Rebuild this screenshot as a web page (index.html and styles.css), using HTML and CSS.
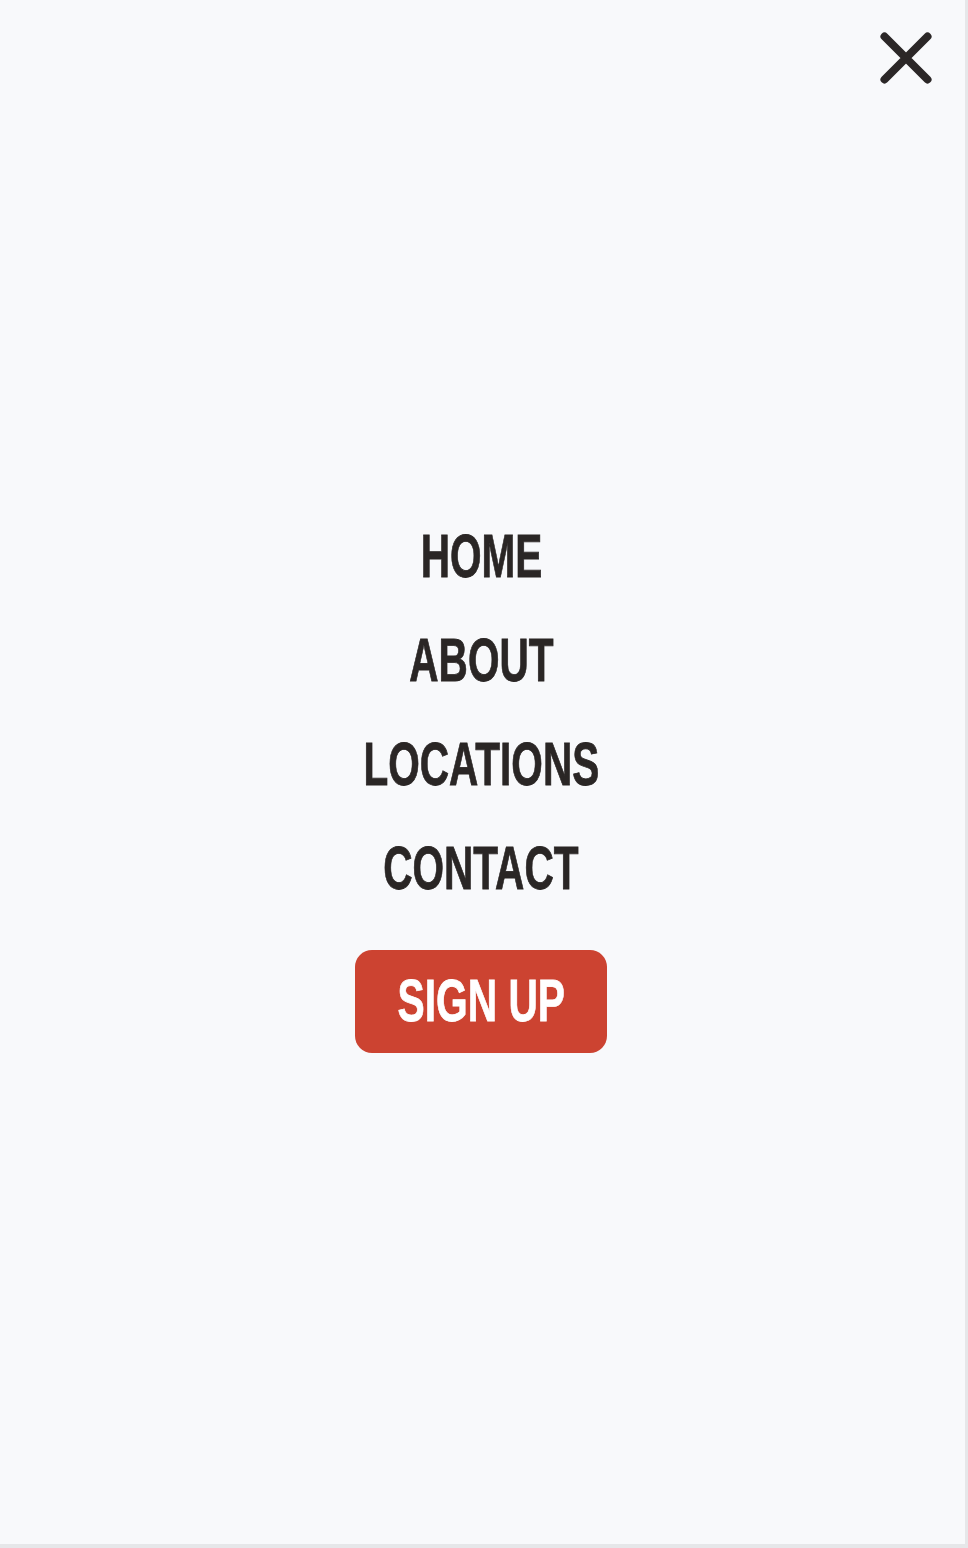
FILE: index.html
```html
<!DOCTYPE html>
<html lang="en">
<head>
<meta charset="utf-8">
<title>Menu</title>
<link rel="stylesheet" href="styles.css">
</head>
<body>
<div class="panel">
  <button class="close" aria-label="Close menu">
    <svg width="54" height="54" viewBox="0 0 54 54"><path d="M5.5 5.5 L48.5 48.5 M48.5 5.5 L5.5 48.5" stroke="#2b2727" stroke-width="8" stroke-linecap="round" fill="none"/></svg>
  </button>
  <nav class="menu">
    <a class="menu-link" href="#"><span class="cond">HOME</span></a>
    <a class="menu-link" href="#"><span class="cond">ABOUT</span></a>
    <a class="menu-link" href="#"><span class="cond">LOCATIONS</span></a>
    <a class="menu-link" href="#"><span class="cond">CONTACT</span></a>
    <a class="signup" href="#"><span class="cond cond-btn">SIGN UP</span></a>
  </nav>
</div>
</body>
</html>
```
FILE: styles.css
```css
html, body {
  margin: 0;
  padding: 0;
}
body {
  background: #e6e7e9;
  width: 968px;
  height: 1548px;
  overflow: hidden;
}
.panel {
  position: relative;
  width: 965px;
  height: 1544px;
  background: #f8f9fb;
  box-sizing: border-box;
  padding-top: 504px;
  padding-right: 3px;
}
.close {
  position: absolute;
  top: 31px;
  left: 879px;
  width: 54px;
  height: 54px;
  padding: 0;
  border: 0;
  background: none;
  cursor: pointer;
}
.close svg { display: block; }
.menu {
  display: flex;
  flex-direction: column;
  align-items: center;
  font-family: "Liberation Sans", "DejaVu Sans", sans-serif;
  font-weight: 700;
}
.menu-link {
  display: block;
  height: 104px;
  line-height: 104px;
  font-size: 61px;
  color: #2a2625;
  text-decoration: none;
  -webkit-text-stroke: 0.8px #2a2625;
}
.cond {
  display: inline-block;
  letter-spacing: 0;
  transform: scaleX(0.665);
}
.signup {
  display: block;
  margin-top: 30px;
  width: 252px;
  height: 103px;
  line-height: 103px;
  border-radius: 17px;
  background: #cc4331;
  color: #ffffff;
  font-size: 59px;
  text-align: center;
  text-decoration: none;
  -webkit-text-stroke: 0.8px #ffffff;
}
.cond-btn {
  transform: scaleX(0.69);
}
```
